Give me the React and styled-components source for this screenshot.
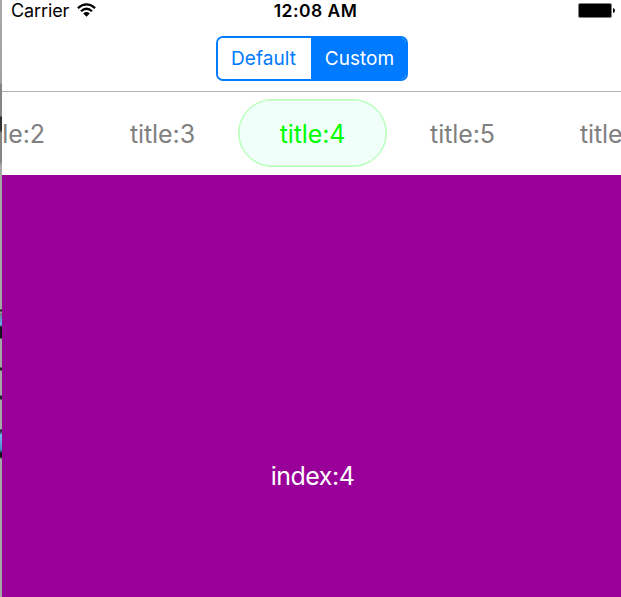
import React from "react";
import styled, { createGlobalStyle } from "styled-components";

const GlobalStyle = createGlobalStyle`
  * { box-sizing: border-box; }
  body { margin: 0; overflow: hidden; background: #fff; font-family: Inter, "Liberation Sans", sans-serif; }
`;

const Desktop = styled.div`
  display: grid;
  grid-template-columns: 2px 619px;
  width: 621px;
  height: 597px;
  overflow: hidden;
`;

const WindowEdge = styled.div`
  background: linear-gradient(
    #a8a8a8 0, #a2a2a2 83px, #858585 84px, #858585 116px,
    #303030 117px, #303030 130px, #858585 133px, #858585 162px,
    #a6a6a6 165px, #a6a6a6 309px, #222 310px, #222 311px,
    #a6a6a6 312px, #777 314px, #5f91c0 318px, #6faee8 325px,
    #16121c 327px, #16121c 338px, #a6a6a6 339px, #a6a6a6 367px,
    #222 368px, #222 370px, #a6a6a6 371px, #a6a6a6 395px,
    #1c2430 396px, #1c2430 399px, #a6a6a6 400px, #a6a6a6 429px,
    #1c2430 430px, #2e4054 432px, #76b8f0 435px, #4487c8 450px,
    #16121c 453px, #16121c 457px, #a6a6a6 459px, #a6a6a6 100%
  );
`;

const Screen = styled.div`
  display: flex;
  flex-direction: column;
  min-width: 0;
  overflow: hidden;
  background: #fff;
`;

const StatusBar = styled.header`
  display: grid;
  grid-template-columns: 1fr auto 1fr;
  align-items: center;
  height: 22px;
  padding: 0 6px 0 9px;
  color: #000;
  font-size: 18px;
  line-height: 22px;
`;

const Carrier = styled.div`
  display: flex;
  align-items: center;
  gap: 8px;
  letter-spacing: -0.1px;
  svg { display: block; margin-top: -3px; }
`;

const Clock = styled.div`
  padding-left: 5px;
  font-weight: 600;
  font-size: 17.5px;
  letter-spacing: 0.45px;
`;

const Battery = styled.svg`
  justify-self: end;
  display: block;
`;

const NavBar = styled.nav`
  display: flex;
  justify-content: center;
  height: 70px;
  padding: 14px 0 0 1px;
  border-bottom: 1px solid #b2b2b2;
`;

const Segments = styled.div`
  display: grid;
  grid-template-columns: 93px 95px;
  width: 192px;
  height: 45px;
  border: 2px solid #007aff;
  border-radius: 7px;
  overflow: hidden;
`;

const Segment = styled.button`
  border: 0;
  padding: 0;
  text-indent: ${(p) => (p.$active ? "2px" : "-2px")};
  background: ${(p) => (p.$active ? "#007aff" : "#fff")};
  color: ${(p) => (p.$active ? "#fff" : "#007aff")};
  font: 400 19px/41px Inter, "Liberation Sans", sans-serif;
  letter-spacing: 0.05px;
`;

const TitleStrip = styled.div`
  display: flex;
  justify-content: center;
  height: 83px;
  padding: 7px 0 0 2px;
  overflow: hidden;
`;

const Title = styled.div`
  flex: 0 0 149px;
  margin: 0 0.5px;
  height: 68px;
  border: 1px solid ${(p) => (p.$active ? "#b3ffb3" : "transparent")};
  border-radius: 34px;
  box-shadow: ${(p) => (p.$active ? "inset 0 0 0 0.5px #b3ffb3" : "none")};
  background: ${(p) => (p.$active ? "#f0fff9" : "transparent")};
  color: ${(p) => (p.$active ? "#00ff00" : "#808080")};
  font-size: 25px;
  letter-spacing: -0.1px;
  line-height: 68px;
  text-align: center;
  white-space: nowrap;
`;

const Page = styled.main`
  flex: 1;
  display: flex;
  justify-content: center;
  padding: 284px 0 0 2px;
  background: #990099;
  color: #fff;
  font-size: 25px;
  letter-spacing: -0.5px;
  line-height: 34px;
`;

export default function App() {
  return (
    <>
      <GlobalStyle />
      <Desktop>
        <WindowEdge />
        <Screen>
          <StatusBar>
            <Carrier>
              <span>Carrier</span>
              <svg width="19" height="14" viewBox="0 0 19 14">
                <g fill="none" stroke="#000" strokeWidth="2.2">
                  <path d="M0.9 5.1Q9.5-2.5 18.1 5.1" />
                  <path d="M4 8.2Q9.5 3.3 15 8.2" />
                </g>
                <path d="M6.2 10.4Q9.5 7.7 12.8 10.4L9.5 13.7Z" />
              </svg>
            </Carrier>
            <Clock>12:08 AM</Clock>
            <Battery width="37" height="16" viewBox="0 0 37 16">
              <rect x="0.5" y="0.5" width="33" height="14" rx="1.5" stroke="#808080" />
              <path d="M35 5Q37 5.5 37 7.5T35 10Z" />
            </Battery>
          </StatusBar>
          <NavBar>
            <Segments>
              <Segment>Default</Segment>
              <Segment $active>Custom</Segment>
            </Segments>
          </NavBar>
          <TitleStrip>
            {[2, 3, 4, 5, 6].map((n) => (
              <Title key={n} $active={n === 4}>title:{n}</Title>
            ))}
          </TitleStrip>
          <Page>index:4</Page>
        </Screen>
      </Desktop>
    </>
  );
}
